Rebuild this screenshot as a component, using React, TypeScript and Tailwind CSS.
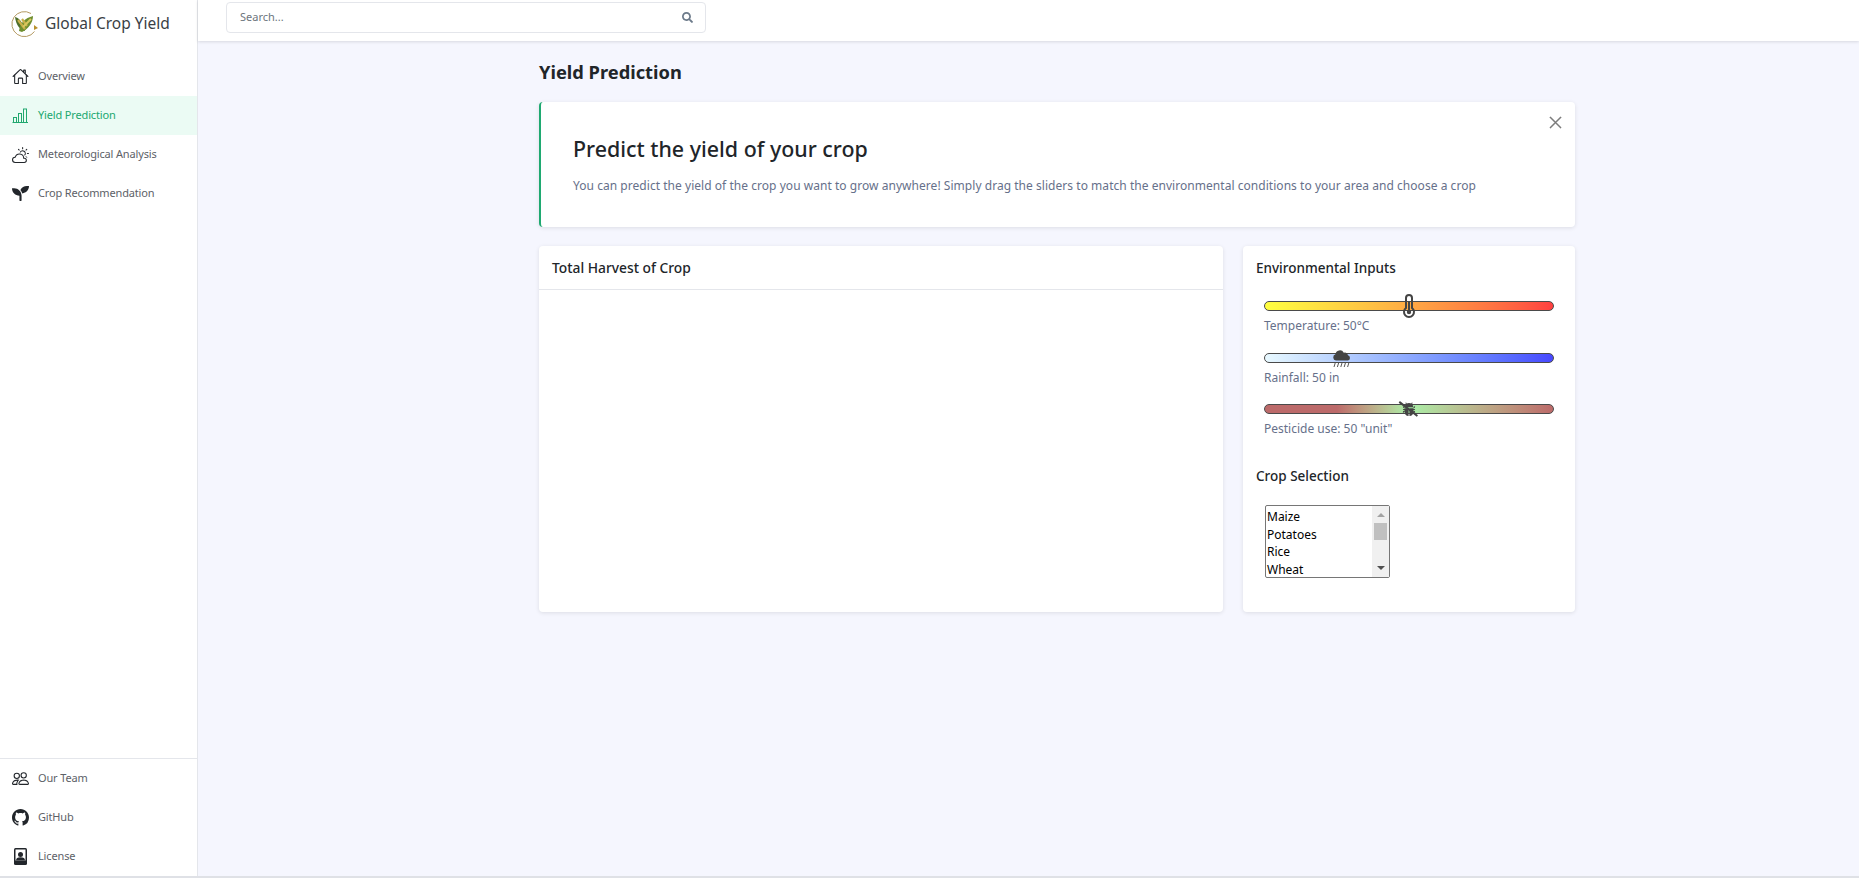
import type { ReactNode } from "react";
import { BsBugFill, BsCloudSun, BsGithub, BsPeople, BsXLg } from "react-icons/bs";
import { FaSearch, FaSeedling } from "react-icons/fa";
import { IoHomeOutline } from "react-icons/io5";

const crops = ["Maize", "Potatoes", "Rice", "Wheat", "Sorghum", "Soybeans", "Cassava", "Yams", "Sweet potatoes", "Plantains", "Barley", "Millet"];

function Logo() {
  return (
    <svg width="28" height="28" viewBox="0 0 28 28" className="shrink-0">
      <path d="M21 3.5 A12.5 12.5 0 1 0 24.5 21.5" fill="none" stroke="#b49a62" strokeWidth="1" />
      <path d="M5 7 C9 8 13 12 15 21 C10 20 6 15 5 7Z" fill="#4f6f2a" />
      <path d="M9 21 C10 13 15 8 23 6 C23 13 18 19 12 22Z" fill="#6f8f30" />
      <path d="M8 10 L15 19 M12 9 L17 16" stroke="#c9b04a" strokeWidth="2.2" />
      <path d="M13 17 L21 9" stroke="#d8c860" strokeWidth="2" />
      <path d="M24 15 l4 3 -4 2z" fill="#b8902c" />
    </svg>
  );
}

function BarsIcon() {
  return (
    <svg width="17" height="15" viewBox="0 0 17 15" fill="none" stroke="currentColor" strokeWidth="1" className="block">
      <path d="M0.5 14.5 H16" />
      <rect x="1.5" y="9.5" width="3" height="5" />
      <rect x="6.5" y="5.5" width="3" height="9" />
      <rect x="11.5" y="1" width="3" height="13.5" />
    </svg>
  );
}

function BadgeIcon() {
  return (
    <svg width="13" height="17" viewBox="0 0 13 17" className="block">
      <rect x="0" y="0" width="13" height="17" rx="1.5" fill="#22262b" />
      <rect x="1.5" y="1.5" width="10" height="11" fill="#fff" />
      <circle cx="6.5" cy="6.5" r="2.5" fill="#22262b" />
      <path d="M2 12.5 a4.5 3.2 0 0 1 9 0Z" fill="#22262b" />
    </svg>
  );
}

function Thermometer() {
  return (
    <svg width="13" height="24" viewBox="0 0 13 24" fill="none" className="block">
      <path d="M3.5 14 V4 a3 3 0 0 1 6 0 V14 a5 5 0 1 1 -6 0Z" stroke="#444" strokeWidth="2" />
      <path d="M6.5 7 V17" stroke="#444" strokeWidth="2" />
      <circle cx="6.5" cy="18" r="2.2" fill="#444" />
    </svg>
  );
}

function RainCloud() {
  return (
    <svg width="20" height="20" viewBox="0 0 20 20" className="block">
      <path d="M4 12.5 a3.2 3.2 0 0 1 -0.6 -6.2 a4.5 4.5 0 0 1 8.4 -1.6 a3.4 3.4 0 0 1 4.2 2.6 a2.7 2.7 0 0 1 0 5.2Z" fill="#444" />
      <path d="M2 19 l1.2 -4 M5.4 19 l1.2 -4 M8.8 19 l1.2 -4 M12.2 19 l1.2 -4 M15.6 19 l1.2 -4" stroke="#444" strokeWidth="0.9" />
    </svg>
  );
}

function SlashedBug() {
  return (
    <span className="relative block text-[14px] text-[#444]">
      <BsBugFill className="block" />
      <span className="absolute left-[-5px] top-[6px] h-[1.5px] w-[23px] rotate-[38deg] bg-[#444]" />
    </span>
  );
}

function NavItem({ icon, label, active }: { icon: ReactNode; label: string; active?: boolean }) {
  return (
    <a className={`flex h-[39px] items-center gap-[9px] pl-3 text-[11px] tracking-[-0.15px] ${active ? "bg-[#ebfbf4] text-[#21a86f]" : "text-[#5d6167]"}`}>
      <span className={`flex w-[17px] justify-center text-[17px] ${active ? "text-[#21a86f]" : "text-[#22262b]"}`}>{icon}</span>
      {label}
    </a>
  );
}

function Slider({ gradient, label, pos, icon }: { gradient: string; label: string; pos: string; icon: ReactNode }) {
  return (
    <div className="mb-[17.5px]">
      <div className={`relative h-[10px] rounded-full border border-[#4a4a4a] ${gradient}`}>
        <span className={`absolute top-1/2 -translate-x-1/2 -translate-y-1/2 ${pos}`}>{icon}</span>
      </div>
      <p className="mt-[6px] text-[12px] leading-[18px] text-[#66708a]">{label}</p>
    </div>
  );
}

export default function App() {
  return (
    <div className="flex h-[878px] overflow-hidden border-b-2 border-[#dfe1e6] bg-[#f5f6fe] font-['Noto_Sans',sans-serif] text-[#212529]">
      <aside className="flex w-[198px] shrink-0 flex-col border-r border-[#e4e6eb] bg-white">
        <div className="flex h-[47px] items-center gap-[7px] pl-[10px]">
          <Logo />
          <span className="text-[15.5px] text-[#3a3f45]">Global Crop Yield</span>
        </div>
        <nav className="mt-[10px] flex-1">
          <NavItem icon={<IoHomeOutline />} label="Overview" />
          <NavItem icon={<BarsIcon />} label="Yield Prediction" active />
          <NavItem icon={<BsCloudSun />} label="Meteorological Analysis" />
          <NavItem icon={<FaSeedling />} label="Crop Recommendation" />
        </nav>
        <div className="border-t border-[#e4e6eb]">
          <NavItem icon={<BsPeople />} label="Our Team" />
          <NavItem icon={<BsGithub />} label="GitHub" />
          <NavItem icon={<BadgeIcon />} label="License" />
        </div>
      </aside>

      <div className="flex min-w-0 flex-1 flex-col">
        <header className="h-[41px] shrink-0 bg-white pl-7 pt-[2px] shadow-[0_1px_3px_rgba(0,0,0,0.12)]">
          <div className="flex h-[31px] w-[480px] items-center justify-between rounded border border-[#e4e6eb] pl-[13px] pr-[12px]">
            <span className="text-[11px] text-[#6c757d]">Search...</span>
            <FaSearch className="text-[11px] text-[#6c7a8a]" />
          </div>
        </header>

        <main className="ml-[341px] w-[1036px]">
          <h1 className="mt-[19px] text-[18.3px] font-bold leading-[24px] text-[#212529]">Yield Prediction</h1>

          <section className="relative mt-[18px] h-[125px] rounded border-l-2 border-[#1fa971] bg-white pl-[32px] pt-[31px] shadow-[0_1px_4px_rgba(0,0,0,0.1)]">
            <button className="absolute right-[12px] top-[13px] text-[15px] text-[#777]"><BsXLg className="stroke-[0.6px]" /></button>
            <h2 className="text-[21.4px] font-medium leading-[32px] text-[#212529]">Predict the yield of your crop</h2>
            <p className="mt-[12px] text-[12px] tracking-[0.04px] leading-[18px] text-[#66708a]">
              You can predict the yield of the crop you want to grow anywhere! Simply drag the sliders to match the environmental conditions to your area and choose a crop
            </p>
          </section>

          <div className="mt-[19px] flex gap-[20px]">
            <section className="h-[366px] w-[684px] rounded bg-white shadow-[0_1px_4px_rgba(0,0,0,0.1)]">
              <h3 className="flex h-[44px] items-center border-b border-[#e4e6eb] pl-[13px] pt-px text-[13.8px] font-medium">Total Harvest of Crop</h3>
            </section>

            <section className="h-[366px] w-[332px] rounded bg-white px-[13px] pt-[12px] shadow-[0_1px_4px_rgba(0,0,0,0.1)]">
              <h3 className="text-[13.5px] font-medium leading-[20px]">Environmental Inputs</h3>
              <div className="mt-[23px] px-[8px]">
                <Slider
                  gradient="bg-gradient-to-r from-[#ffff40] to-[#ff4040]"
                  label="Temperature: 50°C"
                  pos="left-[144px]"
                  icon={<Thermometer />}
                />
                <Slider
                  gradient="bg-gradient-to-r from-[#e8f9ff] to-[#4848ff]"
                  label="Rainfall: 50 in"
                  pos="left-[77px]"
                  icon={<RainCloud />}
                />
                <Slider
                  gradient="bg-gradient-to-r from-[#bc6a6a] from-25% via-[#a8f0a8] via-50% to-[#bc6a6a]"
                  label='Pesticide use: 50 "unit"'
                  pos="left-[144px]"
                  icon={<SlashedBug />}
                />
              </div>
              <h3 className="mt-[28px] text-[13.5px] font-medium leading-[20px]">Crop Selection</h3>
              <div className="relative ml-[9px] mt-[19px] h-[73px] w-[125px]">
                <select
                  multiple
                  size={4}
                  className="h-[73px] w-[125px] overflow-hidden rounded-[2px] border border-[#767676] pl-px pt-[2px] text-[12px] text-black"
                >
                  {crops.map((c) => (
                    <option key={c} className="h-[17.6px] leading-[17px]">{c}</option>
                  ))}
                </select>
                {/* listbox scrollbar, the browser hides the native one */}
                <div className="absolute bottom-px right-px top-px flex w-[17px] flex-col items-center bg-[#f0f0f0] pt-[7px]">
                  <span className="size-0 border-x-[4px] border-b-[4px] border-x-transparent border-b-[#a3a3a3]" />
                  <span className="mt-[6px] h-[17px] w-[13px] bg-[#c0c0c0]" />
                  <span className="mt-auto mb-[7px] size-0 border-x-[4px] border-t-[4px] border-x-transparent border-t-[#505050]" />
                </div>
              </div>
            </section>
          </div>
        </main>
      </div>
    </div>
  );
}
